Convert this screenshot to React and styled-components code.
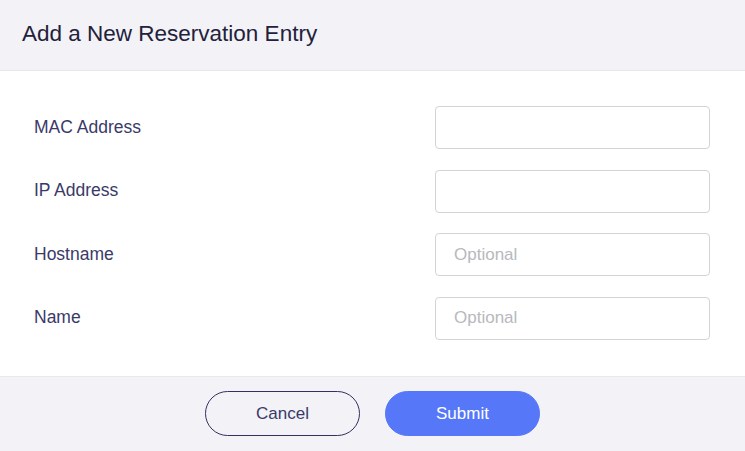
import React from 'react';
import styled, { createGlobalStyle } from 'styled-components';

const GlobalStyle = createGlobalStyle`
  html, body {
    margin: 0;
    padding: 0;
    background: #ffffff;
  }
  body {
    font-family: "Liberation Sans", Arial, sans-serif;
  }
  * {
    box-sizing: border-box;
  }
`;

const Dialog = styled.div`
  width: 745px;
  height: 451px;
  display: flex;
  flex-direction: column;
  background: #fff;
  overflow: hidden;
`;

const Header = styled.div`
  height: 71px;
  flex-shrink: 0;
  display: flex;
  align-items: center;
  padding: 0 22px 3px;
  background: #f2f2f7;
  border-bottom: 1px solid #e6e6ee;
`;

const Title = styled.h2`
  margin: 0;
  font-size: 22.5px;
  font-weight: 400;
  color: #22213a;
`;

const Body = styled.div`
  flex: 1;
  display: flex;
  flex-direction: column;
  gap: 20.5px;
  padding: 35px 35px 0 34px;
`;

const Row = styled.div`
  display: flex;
  align-items: center;
  justify-content: space-between;
  height: 43px;
`;

const Label = styled.label`
  font-size: 17.5px;
  color: #3a3a69;
  margin-top: -1px;
`;

const Input = styled.input`
  width: 275px;
  height: 43px;
  padding: 0 18px;
  border: 1px solid #d4d4d8;
  border-radius: 4px;
  font-family: inherit;
  font-size: 17px;
  color: #333;
  outline: none;

  &::placeholder {
    color: #b8b8be;
  }
`;

const Footer = styled.div`
  height: 75px;
  flex-shrink: 0;
  display: flex;
  align-items: center;
  justify-content: center;
  gap: 25px;
  padding-bottom: 1px;
  background: #f2f2f7;
  border-top: 1px solid #e8e8ef;
`;

const Button = styled.button`
  width: 155px;
  height: 45px;
  border-radius: 23px;
  font-family: inherit;
  font-size: 17px;
  cursor: pointer;
  border: 1px solid ${p => (p.$primary ? '#5577f8' : '#33315f')};
  background: ${p => (p.$primary ? '#5577f8' : 'transparent')};
  color: ${p => (p.$primary ? '#ffffff' : '#3a3a69')};
`;

const fields = [
  { id: 'mac', label: 'MAC Address', placeholder: '' },
  { id: 'ip', label: 'IP Address', placeholder: '' },
  { id: 'host', label: 'Hostname', placeholder: 'Optional' },
  { id: 'name', label: 'Name', placeholder: 'Optional' },
];

export default function App() {
  return (
    <>
      <GlobalStyle />
      <Dialog>
        <Header>
          <Title>Add a New Reservation Entry</Title>
        </Header>
        <Body>
          {fields.map(f => (
            <Row key={f.id}>
              <Label htmlFor={f.id}>{f.label}</Label>
              <Input id={f.id} placeholder={f.placeholder} />
            </Row>
          ))}
        </Body>
        <Footer>
          <Button type="button">Cancel</Button>
          <Button type="submit" $primary>Submit</Button>
        </Footer>
      </Dialog>
    </>
  );
}
